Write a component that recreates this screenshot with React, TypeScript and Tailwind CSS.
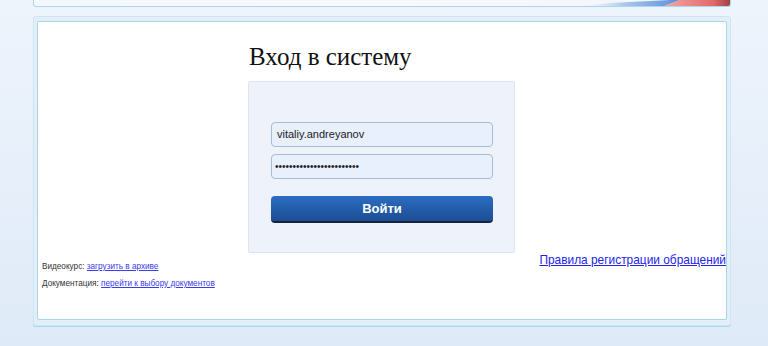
import React from "react";

function HeaderStrip() {
  return (
    <div className="relative h-[7px] overflow-hidden rounded-b-[3px] border-b border-x border-[#a9d8ea] bg-gradient-to-r from-[#f3f8fc] via-[#f7fafd] to-[#f1f6fb]">
      <svg className="absolute right-0 top-0 h-[7px] w-[160px]" viewBox="0 0 160 7" preserveAspectRatio="none">
        <defs>
          <linearGradient id="blueSweep" x1="0" x2="1" y1="0" y2="0">
            <stop offset="0" stopColor="#ffffff" stopOpacity="0" />
            <stop offset="0.5" stopColor="#a9c7ec" />
            <stop offset="1" stopColor="#5b8fd8" />
          </linearGradient>
          <linearGradient id="redSweep" x1="0" x2="1" y1="0" y2="0">
            <stop offset="0" stopColor="#f3a9a9" />
            <stop offset="0.75" stopColor="#e36a6a" />
            <stop offset="1" stopColor="#9e4242" />
          </linearGradient>
        </defs>
        <polygon points="0,7 40,3 100,0 110,0 92,7" fill="url(#blueSweep)" />
        <polygon points="92,7 110,0 160,0 160,7" fill="url(#redSweep)" />
      </svg>
    </div>
  );
}

function LoginBox() {
  return (
    <div className="ml-[206px] mt-[9px] w-[267px] rounded-[2px] border border-[#dbe5f1] bg-[#eef3fb] pb-[29px] pl-[22px] pr-[21px] pt-[40px]">
      <div className="flex h-[25px] items-center rounded-[4px] border border-[#a6bcd7] bg-[#e8effd] px-[5px] text-[11px] text-[#222]">
        vitaliy.andreyanov
      </div>
      <div className="mt-[7px] flex h-[25px] items-center rounded-[4px] border border-[#a6bcd7] bg-[#e8effd] px-[3px] text-[10px] text-[#222]">
        ••••••••••••••••••••••••
      </div>
      <button className="mt-[17px] flex h-[27px] w-[222px] items-center justify-center rounded-[4px] border-b-2 border-[#14243c] bg-gradient-to-b from-[#2b6dc2] to-[#1d4e93] text-[13px] font-bold text-white">
        Войти
      </button>
    </div>
  );
}

export default function App() {
  return (
    <div className="h-[346px] w-[768px] overflow-hidden bg-gradient-to-b from-[#eef4fc] to-[#dfeaf8] font-['Liberation_Sans',Arial,sans-serif]">
      <div className="ml-[33px] w-[698px]">
        <HeaderStrip />
        <div className="mt-[9px] rounded-[3px] border border-[#cfe6f2] bg-[#e2eff9] px-[3px] pb-[5px] pt-[4px] shadow-[0_1px_0_#a9d6e8]">
          <div className="h-[299px] rounded-[2px] border border-[#a7d6e8] bg-white pl-[4px] pr-[0px]">
            <div className="ml-[207px] pt-[20px]">
              <h1 className="font-['Liberation_Serif','Times_New_Roman',serif] text-[25px] leading-[30px] text-[#111]">
                Вход в систему
              </h1>
            </div>
            <LoginBox />
            <div className="flex items-start justify-between">
              <div className="pt-[8px] text-[8.2px] leading-[12px] text-[#333]">
                <div>
                  Видеокурс:{" "}
                  <a href="#" className="text-[#3b3bf0] underline">
                    загрузить в архиве
                  </a>
                </div>
                <div className="mt-[5px]">
                  Документация:{" "}
                  <a href="#" className="text-[#3b3bf0] underline">
                    перейти к выбору документов
                  </a>
                </div>
              </div>
              <a href="#" className="text-[11.9px] leading-[15px] text-[#2323e8] underline">
                Правила регистрации обращений
              </a>
            </div>
          </div>
        </div>
      </div>
    </div>
  );
}
